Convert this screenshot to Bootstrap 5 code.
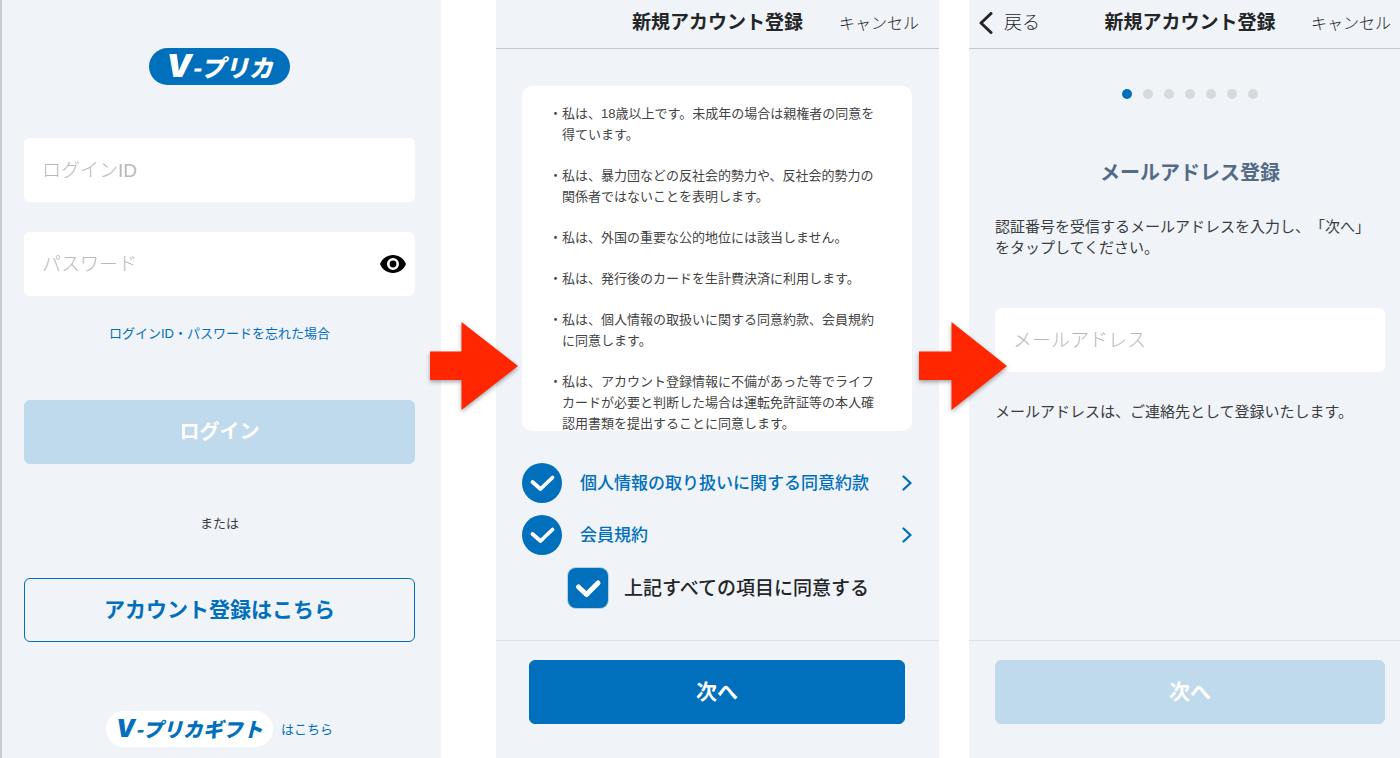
<!DOCTYPE html>
<html lang="ja">
<head>
<meta charset="utf-8">
<meta name="viewport" content="width=device-width, initial-scale=1">
<title>V-プリカ アカウント登録</title>
<link href="https://cdn.jsdelivr.net/npm/bootstrap@5.3.0/dist/css/bootstrap.min.css" rel="stylesheet">
<style>
  :root { --brand: #0070bc; --brand-pale: #bfdaec; --panel: #f0f3f8; --ink: #232527; --soft: #3a3c3e; }
  body { font-family: "Liberation Sans", "Noto Sans CJK JP", sans-serif; color: var(--soft); background: #fff; font-size: 13px; line-height: 21px; text-spacing-trim: space-all; }
  a { color: var(--brand); text-decoration: none; }
  .flow { display: grid; grid-template-columns: minmax(0, 441fr) 55px minmax(0, 443fr) 30px minmax(0, 431fr); }
  .screen { background: var(--panel); }
  .screen-login { border-left: 2px solid #c9cccf; padding: 48px 26px 11px 22px; }
  .screen-body { padding: 37px 27px 0 26px; }
  .screen-mail .screen-body { padding: 40px 15px 0 26px; }

  .logo { font-family: "Noto Sans CJK JP", sans-serif; font-weight: 900; font-style: italic; white-space: nowrap; }
  .logo .initial { font-family: Inter, sans-serif; }
  .logo-main { background: var(--brand); color: #fff; width: 141px; height: 37px; font-size: 24px; line-height: 35px; }
  .logo-main .initial { font-size: 32px; }
  .logo-gift { background: #fff; color: var(--brand); width: 167px; height: 36px; font-size: 20px; line-height: 35px; }
  .logo-gift .initial { font-size: 24px; }

  .field { height: 64px; border: 0; border-radius: 6px; padding: 2px 18px 0; font-size: 19px; }
  .field::placeholder { color: #b8b8b8; font-weight: 300; opacity: 1; }
  .fields { margin-top: 53px; gap: 30px; }
  .reveal { position: absolute; top: 0; right: 0; height: 64px; padding: 0 9px; border: 0; }

  .action { height: 64px; border-radius: 6px; font-size: 21px; font-weight: 700; --bs-btn-bg: var(--brand); --bs-btn-color: #fff; --bs-btn-border-color: var(--brand);
    --bs-btn-disabled-bg: var(--brand-pale); --bs-btn-disabled-border-color: var(--brand-pale); --bs-btn-disabled-color: #fff; --bs-btn-disabled-opacity: 1; }
  .action-outline { --bs-btn-bg: transparent; --bs-btn-color: var(--brand); }
  .action-login { font-size: 20px; }
  .forgot { margin-top: 27px; margin-bottom: 56px; }
  .or { margin: 49px 0 44px; }
  .gift { margin-top: 69px; gap: 8px; }

  .bar { display: grid; grid-template-columns: 1fr auto 1fr; align-items: center; height: 49px; padding: 0 20px 2px; border-bottom: 1px solid #c5c9cd; }
  .bar h1 { font-size: 19px; font-weight: 700; line-height: 28px; color: var(--ink); }
  .bar a { color: var(--ink); font-size: 16px; font-weight: 300; white-space: nowrap; }
  .screen-mail .bar { padding-right: 9px; }
  .bar .back { font-size: 18px; margin-left: -10px; gap: 11px; }

  .terms { background: #fff; border-radius: 10px; max-height: 345px; padding: 17px 32px 0 27px; color: #444; }
  .terms ul { gap: 20px; }
  .terms li { padding-left: 13px; text-indent: -13px; }
  .agree { margin-top: 32px; gap: 12px; }
  .agree-row { height: 40px; gap: 18px; font-size: 17px; font-weight: 500; }
  .tick { width: 40px; height: 40px; border: 0; }
  .tick:checked { background-color: var(--brand); background-size: 40px 40px;
    background-image: url("data:image/svg+xml,%3Csvg xmlns='http://www.w3.org/2000/svg' viewBox='0 0 40 40'%3E%3Cpath d='M10.500 19 18.500 26 30.500 14.500' fill='none' stroke='%23fff' stroke-width='3.8' stroke-linecap='round' stroke-linejoin='round'/%3E%3C/svg%3E"); }
  .tick.tick-square { border-radius: 8px; box-shadow: 0 0 0 1px #b5cfe3; }
  .tick.tick-square:checked { background-image: url("data:image/svg+xml,%3Csvg xmlns='http://www.w3.org/2000/svg' viewBox='0 0 40 40'%3E%3Cpath d='M10.500 19 18.500 26.500 30 15' fill='none' stroke='%23fff' stroke-width='5' stroke-linecap='round' stroke-linejoin='round'/%3E%3C/svg%3E"); }
  .agree-all { height: 40px; gap: 16px; padding-left: 46px; margin-top: 1px; font-size: 19px; font-weight: 500; color: var(--ink); }

  .bottom { border-top: 1px solid #dde2e8; padding: 19px 34px 34px 33px; }
  .screen-mail .bottom { padding-left: 26px; padding-right: 15px; }

  .dots { gap: 11px; }
  .dots span { width: 10px; height: 10px; border-radius: 50%; background: #d8d9da; }
  .dots .now { background: var(--brand); }
  .mail-title { font-size: 20px; font-weight: 700; line-height: 28px; color: #546b86; margin: 60px 0 29px; }
  .copy { font-size: 15px; padding-right: 11px; }
  .mail-field { margin: 50px 0 29px; }

  .gutter { position: relative; }
  .arrow { position: absolute; top: 322px; z-index: 2; overflow: visible; filter: drop-shadow(0 2px 2px rgba(0,0,0,.35)); }
  .gutter-wide .arrow { left: -11px; }
  .gutter-narrow .arrow { left: -20px; }
</style>
</head>
<body>
<main class="flow min-vh-100 overflow-hidden">

  <section class="screen screen-login d-flex flex-column">
    <div class="logo logo-main rounded-pill align-self-center text-center"><span class="initial">V</span>-プリカ</div>
    <form class="d-flex flex-column">
      <div class="fields d-flex flex-column">
        <input class="form-control field" type="text" placeholder="ログインID" aria-label="ログインID">
        <div class="position-relative">
          <input class="form-control field" type="password" placeholder="パスワード" aria-label="パスワード">
          <button class="reveal bg-transparent" type="button" aria-label="パスワードを表示">
            <svg class="d-block" width="26" height="18" viewBox="0 0 26 18"><path fill="#000" fill-rule="evenodd" d="M13 0C7 0 2.200 3.700 0 9c2.200 5.300 7 9 13 9s10.800-3.700 13-9C23.800 3.700 19 0 13 0Zm0 15a6 6 0 1 1 0-12 6 6 0 0 1 0 12Zm0-2.600a3.400 3.400 0 1 0 0-6.800 3.400 3.400 0 0 0 0 6.800Z"/></svg>
          </button>
        </div>
      </div>
      <a class="forgot align-self-center" href="#">ログインID・パスワードを忘れた場合</a>
      <button class="btn action action-login" type="submit" disabled>ログイン</button>
      <p class="or text-center">または</p>
      <button class="btn action action-outline" type="button">アカウント登録はこちら</button>
    </form>
    <a class="gift d-flex align-items-center justify-content-center" href="#">
      <span class="logo logo-gift rounded-pill text-center"><span class="initial">V</span>-プリカギフト</span>
      <span>はこちら</span>
    </a>
  </section>

  <div class="gutter gutter-wide">
    <svg class="arrow" width="88" height="88" viewBox="0 0 88 88" aria-hidden="true"><path fill="#ff2600" d="M0 29.500H31.500V0L88 44 31.500 88V58H0Z"/></svg>
  </div>

  <section class="screen screen-terms d-flex flex-column">
    <header class="bar">
      <span></span>
      <h1 class="mb-0">新規アカウント登録</h1>
      <a class="text-end" href="#">キャンセル</a>
    </header>
    <div class="screen-body">
      <div class="terms overflow-hidden">
        <ul class="list-unstyled d-flex flex-column mb-0">
          <li>・私は、18歳以上です。未成年の場合は親権者の同意を得ています。</li>
          <li>・私は、暴力団などの反社会的勢力や、反社会的勢力の関係者ではないことを表明します。</li>
          <li>・私は、外国の重要な公的地位には該当しません。</li>
          <li>・私は、発行後のカードを生計費決済に利用します。</li>
          <li>・私は、個人情報の取扱いに関する同意約款、会員規約に同意します。</li>
          <li>・私は、アカウント登録情報に不備があった等でライフカードが必要と判断した場合は運転免許証等の本人確認用書類を提出することに同意します。</li>
        </ul>
      </div>
      <div class="agree d-flex flex-column">
        <div class="agree-row d-flex align-items-center">
          <input class="form-check-input tick rounded-circle m-0 flex-shrink-0" type="checkbox" checked aria-labelledby="privacy">
          <a id="privacy" class="d-flex flex-grow-1 align-items-center justify-content-between" href="#">個人情報の取り扱いに関する同意約款
            <svg width="10" height="16" viewBox="0 0 10 16" fill="none" stroke="currentColor" stroke-width="2.300" stroke-linecap="round" stroke-linejoin="round"><path d="M1.500 1.500 8.500 8l-7 6.500"/></svg></a>
        </div>
        <div class="agree-row d-flex align-items-center">
          <input class="form-check-input tick rounded-circle m-0 flex-shrink-0" type="checkbox" checked aria-labelledby="rules">
          <a id="rules" class="d-flex flex-grow-1 align-items-center justify-content-between" href="#">会員規約
            <svg width="10" height="16" viewBox="0 0 10 16" fill="none" stroke="currentColor" stroke-width="2.300" stroke-linecap="round" stroke-linejoin="round"><path d="M1.500 1.500 8.500 8l-7 6.500"/></svg></a>
        </div>
        <div class="agree-all d-flex align-items-center">
          <input class="form-check-input tick tick-square m-0 flex-shrink-0" type="checkbox" id="all" checked>
          <label for="all">上記すべての項目に同意する</label>
        </div>
      </div>
    </div>
    <footer class="bottom mt-auto"><button class="btn action w-100" type="button">次へ</button></footer>
  </section>

  <div class="gutter gutter-narrow">
    <svg class="arrow" width="88" height="88" viewBox="0 0 88 88" aria-hidden="true"><path fill="#ff2600" d="M0 29.500H32.500V0L88 44 32.500 88V58H0Z"/></svg>
  </div>

  <section class="screen screen-mail d-flex flex-column">
    <header class="bar">
      <a class="back d-flex align-items-center" href="#"><svg width="14" height="22" viewBox="0 0 14 22" fill="none" stroke="currentColor" stroke-width="3" stroke-linecap="round" stroke-linejoin="round"><path d="M12 1.500 2 11l10 9.500"/></svg>戻る</a>
      <h1 class="mb-0">新規アカウント登録</h1>
      <a class="text-end" href="#">キャンセル</a>
    </header>
    <div class="screen-body">
      <div class="dots d-flex justify-content-center"><span class="now"></span><span></span><span></span><span></span><span></span><span></span><span></span></div>
      <h2 class="mail-title text-center">メールアドレス登録</h2>
      <p class="copy mb-0">認証番号を受信するメールアドレスを入力し、「次へ」をタップしてください。</p>
      <input class="form-control field mail-field" type="email" placeholder="メールアドレス" aria-label="メールアドレス">
      <p class="copy mb-0">メールアドレスは、ご連絡先として登録いたします。</p>
    </div>
    <footer class="bottom mt-auto"><button class="btn action w-100" type="button" disabled>次へ</button></footer>
  </section>

</main>
<script src="https://cdn.jsdelivr.net/npm/bootstrap@5.3.0/dist/js/bootstrap.bundle.min.js"></script>
</body>
</html>
